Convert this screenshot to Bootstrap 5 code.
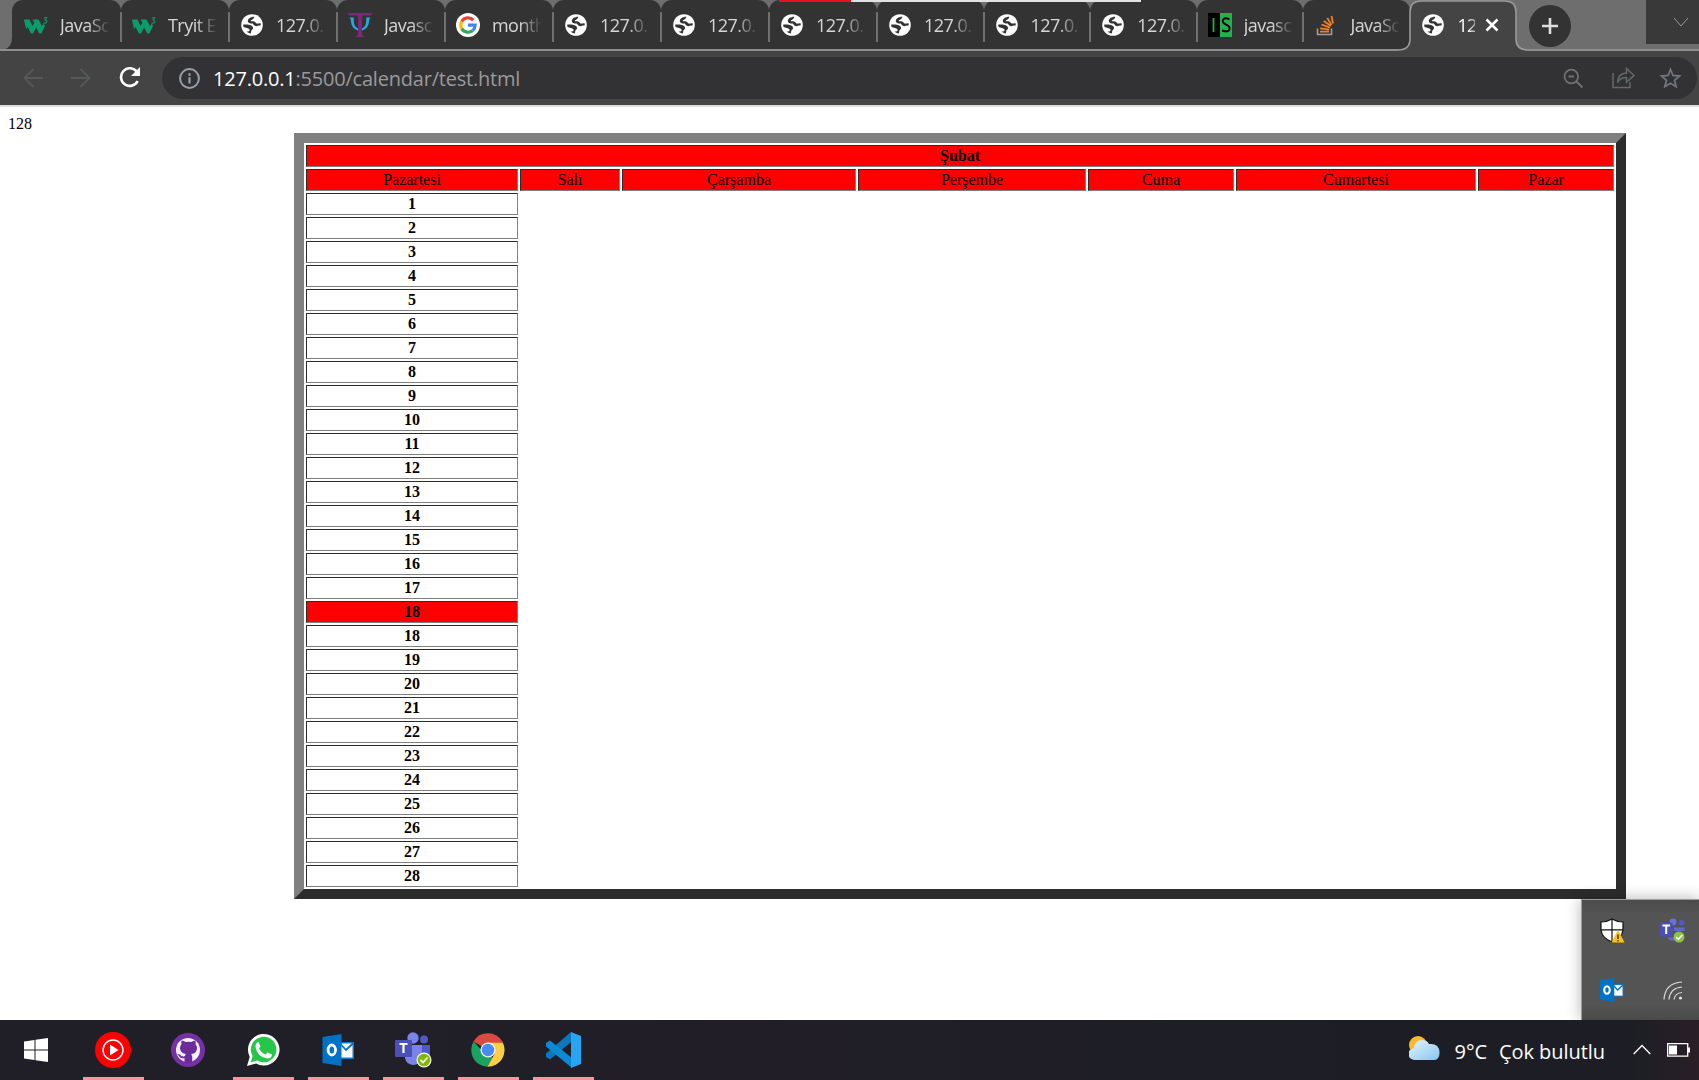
<!DOCTYPE html>
<html lang="tr">
<head>
<meta charset="utf-8">
<title>127.0.0.1:5500/calendar/test.html</title>
<link href="https://cdn.jsdelivr.net/npm/bootstrap@5.3.0/dist/css/bootstrap.min.css" rel="stylesheet">
<style>
body{width:1699px;height:1080px;overflow:hidden;background:#fff;color:#000;font-family:"Open Sans","Noto Sans",sans-serif}
svg{display:block;flex:none}
.strip{height:51px;background:#6e6e6e;padding-left:12px}
.strip-line{left:0;top:0}
.tab{width:108px;height:49px;background:#333;border-radius:11px 11px 0 0;padding-left:11px;color:#d6d6d6;font-size:18px;position:relative}
.tab::after{content:"";position:absolute;right:-1px;top:12px;width:2px;height:30px;background:#707070;z-index:1}
.tab:first-child{width:109px;padding-left:12px}
.tab.slim{width:106.6px}
.tab.last-off{width:107px}
.tab.last-off::after,.tab.on::after{display:none}
.tab.on{width:106px;background:none;color:#fff;padding-left:11px}
.fav{width:24px;height:24px;margin-right:12px}
.tab-text{width:50px;overflow:hidden;white-space:nowrap;letter-spacing:-.55px;line-height:26px;-webkit-mask-image:linear-gradient(90deg,#000 55%,transparent);mask-image:linear-gradient(90deg,#000 55%,transparent)}
.tab.on .tab-text{width:18px;margin-right:10px;-webkit-mask-image:linear-gradient(90deg,#000 60%,rgba(0,0,0,.5));mask-image:linear-gradient(90deg,#000 60%,rgba(0,0,0,.5))}
.plus{width:42px;height:42px;background:#333;margin:5px 0 0 13px}
.caption-box{width:53px;height:44px;background:#393939}
.topbar{left:779px;top:0;width:362px;height:2px;background:#e3e3e3;z-index:3}
.topbar div{width:72px;height:2px;background:#e81123}
.tools{height:56px;background:#444;border-bottom:2px solid #dcdcdc;padding:0 2px 0 23px}
.fwd-icon{margin-left:28px}
.reload-icon{margin:0 21px 0 28px}
.omni{height:42px;border-radius:21px;background:#323234;padding:0 15px 0 17px;color:#9a9a9a}
.url{font-size:20px;letter-spacing:-.21px;line-height:28px;margin-left:13px;padding-top:1px;white-space:nowrap}
.url b{font-weight:400;color:#fff}
.content{height:913px;padding:8px 0 0 8px;font:16px/18px "Liberation Serif",serif}
.cal{width:1332px;margin-left:286px;border:10px solid;border-color:#808080 #2c2c2c #2c2c2c #808080;border-collapse:separate;border-spacing:2px;table-layout:fixed;text-align:center}
.cal td,.cal th{height:22px;padding:1px;line-height:18px;border:1px solid;border-color:#2c2c2c #808080 #808080 #2c2c2c;text-align:center}
.cal .hot{background:red}
.tray{right:0;top:899px;width:118px;height:121px;background:linear-gradient(#4b4b4b,#545454 14px,#545454 105px,#4a4a4a);border:1px solid #9c9c9c;border-width:1px 0 0 1px;box-shadow:0 0 14px rgba(0,0,0,.3)}
.tray .row-a{height:60px;padding-left:18px;gap:35px}
.taskbar{height:60px;background:linear-gradient(90deg,#201f27,#211e27 45%,#1d1e25 80%,#1d1e25 96%,#2a1e27);position:relative;z-index:2;color:#fff}
.app{width:61px;height:60px;margin-right:14px;border-bottom:3px solid transparent;padding:3px 1px 0 0}
.app.run{border-color:#ff949e}
.app.start{margin-left:6px;margin-right:16px;padding-right:2px}
.weather{font-size:20px;white-space:nowrap;letter-spacing:-.05px;margin-right:16px}
.sky-icon{margin:-8px 15px 0 0}
.chev-icon{margin:-5px 0 0 26px}
.batt-icon{margin:-5px -7px 0 16px}
</style>
<script src="https://cdn.jsdelivr.net/npm/bootstrap@5.3.0/dist/js/bootstrap.bundle.min.js"></script>
</head>
<body>
<svg width="0" height="0" class="position-absolute">
<defs>
<symbol id="w3" viewBox="0 0 24 24"><path d="M0 6.500H5.500L8.500 13 10.300 10 8.700 6.500H14.500L18 13 19.800 10.500 21 13 17.300 20.500H15.300L12.200 14.500 9 20.500H7L3.500 14 2 16z" fill="#0a9c6b"/><path d="M19.800 4.700h2.900l-1.600 2.300q2 .3 1.800 1.800-.5 1.800-3.300 1.200" fill="none" stroke="#0a9c6b" stroke-width="1.100"/></symbol>
<symbol id="globe" viewBox="0 0 24 24"><circle cx="12" cy="12" r="10.800" fill="#fff"/><path d="M14 3.700C10.500 3.800 7.700 5.800 7.800 8c.1 1.800 1.800 2.600 5 2.600.8 1.700 2.200 2.600 3.700 2.600 1 0 2.200-.8 4-.6.3-.8.3-1.300.1-2.400-1.600-.2-2.400.4-3.800.2-1-.2-1.200-1.700-2.800-2-1.400-.2-3 .2-3.200-.5-.2-1 3.200-1.500 3.500-4.200z" fill="#333"/><path d="M3.200 11.500c2.500-.3 8.300-.2 9.500 2.200.7 1.400.3 2.700-1.200 3.500-.4.900-.2 2.200-.8 3.400-1.500-.2-3-.9-4.200-2 .8-.4 2.500.2 3-.8.4-1.200-.3-2-1.700-2.500C6 14.800 4.500 14.600 3.400 13.800z" fill="#333"/></symbol>
<symbol id="psi" viewBox="0 0 24 24"><path d="M1.500 4.500h4.300q-.8 9 4.200 11h4q5-2 4.200-11h4.300l-1.200 1.800q-.5 10-7.300 11.200h-4Q3.200 16.300 2.700 6.300z" fill="#27a9e1"/><path d="M0 0h24l-1 2.500h-9V22l3 2H7l3-2V2.500H1z" fill="#82257d"/></symbol>
<symbol id="goog" viewBox="0 0 24 24"><circle cx="12" cy="12" r="12" fill="#fff"/><g fill="none" stroke-width="3.200"><path d="M17.300 7.200A7.200 7.200 0 0 0 5.700 8.500" stroke="#ea4335"/><path d="M5.700 8.500a7.200 7.200 0 0 0 0 7" stroke="#fbbc05"/><path d="M5.700 15.500a7.200 7.200 0 0 0 11 2" stroke="#34a853"/><path d="M16.700 17.500q2.300-2 2.400-5.300H12" stroke="#4285f4"/></g></symbol>
<symbol id="is" viewBox="0 0 24 24"><path d="M0 0h12v24H0z"/><path d="M12 0h12v24H12z" fill="#24b14c"/><path d="M5.500 5v14" stroke="#24b14c" stroke-width="1.800"/><path d="M21.500 6.300q-6.500-2.500-6.800 1.700 0 2.200 3.400 3.600t3.600 3.700q-.5 4.700-7.700 2.200" fill="none" stroke="#000" stroke-width="2"/></symbol>
<symbol id="so" viewBox="0 0 24 24"><path d="M3.500 15.500V21.500h14v-6" fill="none" stroke="#9d9da8" stroke-width="1.600"/><path d="M6 18.700h9M6.200 15.300l9 1.300M7.500 11.500l8.300 3.200M9.800 8l7 5M13.300 5l4.200 7M17.500 3l1.500 7.500" stroke="#f48024" stroke-width="1.800"/></symbol>
<symbol id="outlook" viewBox="0 0 32 32"><path d="M17 8h14.500v17H17z" fill="#0b79cf"/><path d="M18.500 9.500H30V23.500H18.500z" fill="#fff"/><path d="M18 10l5.500 6 7.500-7" fill="none" stroke="#0072c6" stroke-width="1.800"/><path d="M0 3L19 0v32L0 29z" fill="#0072c6"/><ellipse cx="9.300" cy="16" rx="3.700" ry="5" fill="none" stroke="#fff" stroke-width="2.800"/></symbol>
<symbol id="teams" viewBox="0 0 38 36"><circle cx="19" cy="6" r="5.700" fill="#7b83eb"/><circle cx="30" cy="7.500" r="4" fill="#5059c9"/><path d="M25 13h11v9a7 7 0 0 1-11 6z" fill="#5059c9"/><path d="M11 13h17v13q-2 7-9 7-7-1-8-7z" fill="#7b83eb"/><path d="M2 8h15q1 0 1 1v15q0 1-1 1H2q-1 0-1-1V9q0-1 1-1z" fill="#4a50b5"/><path d="M5.500 12h8M9.500 12v9" stroke="#fff" stroke-width="2.200"/><circle cx="30" cy="28" r="7.500" fill="#fff"/><circle cx="30" cy="28" r="6.300" fill="#7fba00"/><path d="M26.500 28l2.500 2.500 4.500-5" fill="none" stroke="#fff" stroke-width="1.800"/></symbol>
<symbol id="teams-small" viewBox="0 0 25 25"><circle cx="13" cy="4" r="3.400" fill="#6a73d8"/><circle cx="21.500" cy="4.800" r="2.800" fill="#5059c9"/><path d="M14 9.500h10.500V13H14zM7.500 19.500h7v3.300q-5 .5-7-3.300z" fill="#6068cf"/><path d="M1 4.500h11.500v14H0V5.500z" fill="#4a50b5"/><path d="M2.500 7.500h7.500M6.200 7.500v8.500" stroke="#fff" stroke-width="2"/><circle cx="19" cy="19" r="5.500" fill="#8bc34a"/><path d="M16 19l2.300 2.200 4-4.200" fill="none" stroke="#fff" stroke-width="1.500"/></symbol>
</defs>
</svg>

<header class="strip d-flex position-relative">
  <div class="topbar position-absolute"><div></div></div>
  <div id="tabs" class="d-flex position-relative"></div>
  <svg class="strip-line position-absolute" width="1699" height="51" viewBox="0 0 1699 51" fill="none"><path d="M5 49q7-2 7-12v12z" fill="#333"/><path d="M1398 50Q1410 50 1410 39V12Q1410 1 1421 1H1505Q1516 1 1516 12V39Q1516 50 1528 50V51H1398z" fill="#444"/><path d="M0 50H1398Q1410 50 1410 39V12Q1410 1 1421 1H1505Q1516 1 1516 12V39Q1516 50 1528 50H1699" stroke="#999" stroke-width="1.600"/></svg>
  <div class="tab on d-flex align-items-center"><svg class="fav"><use href="#globe"/></svg><div class="tab-text">12</div><svg width="14" height="14" viewBox="0 0 14 14"><path d="M1.500 1.500l11 11M12.500 1.500l-11 11" stroke="#fff" stroke-width="2.500"/></svg></div>
  <div class="plus rounded-circle d-flex align-items-center justify-content-center"><svg width="20" height="20"><path d="M10 2v16M2 10h16" stroke="#ddd" stroke-width="2.600"/></svg></div>
  <div class="caption-box ms-auto d-flex align-items-center justify-content-center"><svg class="ms-3" width="18" height="12"><path d="M2 2l7 8 7-8" fill="none" stroke="#999"/></svg></div>
</header>

<nav class="tools d-flex align-items-center">
  <svg width="20" height="20" viewBox="0 0 20 20" fill="none" stroke="#56585a" stroke-width="1.800"><path d="M20 10H2M10.500 1L1.500 10l9 9"/></svg>
  <svg class="fwd-icon" width="20" height="20" viewBox="0 0 20 20" fill="none" stroke="#56585a" stroke-width="1.800"><path d="M0 10h18M9.500 1l9 9-9 9"/></svg>
  <svg class="reload-icon" width="22" height="22" viewBox="0 0 22 22"><path d="M18 5A8.800 8.800 0 1 0 18.700 14" fill="none" stroke="#fff" stroke-width="2.600"/><path d="M21 0v9h-9z" fill="#fff"/></svg>
  <div class="omni flex-grow-1 d-flex align-items-center">
    <svg width="21" height="21" viewBox="0 0 21 21"><circle cx="10.500" cy="10.500" r="9.400" fill="none" stroke="#9aa0a6" stroke-width="2"/><path d="M10.500 9.200v6.300M10.500 5.200v2.500" stroke="#9aa0a6" stroke-width="2.200"/></svg>
    <div class="url"><b>127.0.0.1</b>:5500/calendar/test.html</div>
    <svg class="ms-auto" width="21" height="21" viewBox="0 0 21 21" fill="none" stroke="#6f7173" stroke-width="1.800"><circle cx="8.300" cy="8.500" r="6.800"/><path d="M5.500 8.500h5.500M13 13l6.500 6.500"/></svg>
    <svg class="fwd-icon me-4" width="23" height="22" viewBox="0 0 23 22" fill="none" stroke="#66686a" stroke-width="1.500"><path d="M1 6v14.500h17V15"/><path d="M5.500 15.500Q6 6.500 14.500 6V1.500L22 8.500l-7.500 6.500v-4.500Q8.500 10.500 5.500 15.500z"/></svg>
    <svg width="23" height="22" viewBox="0 0 23 22"><path d="M11.500 2.500l2.500 6 6.500.5-5 4.300 1.600 6.400-5.600-3.400-5.600 3.400 1.600-6.400-5-4.300 6.500-.5z" fill="none" stroke="#737578" stroke-width="1.800"/></svg>
  </div>
</nav>

<main class="content">
  <div>128</div>
  <table class="cal">
    <colgroup><col style="width:212px"><col style="width:100px"><col style="width:234px"><col style="width:228px"><col style="width:146px"><col style="width:240px"><col style="width:136px"></colgroup>
    <tbody id="days">
      <tr><th class="hot" colspan="7">Şubat</th></tr>
      <tr><td class="hot">Pazartesi</td><td class="hot">Salı</td><td class="hot">Çarşamba</td><td class="hot">Perşembe</td><td class="hot">Cuma</td><td class="hot">Cumartesi</td><td class="hot">Pazar</td></tr>
    </tbody>
  </table>
</main>

<aside class="tray position-absolute">
  <div class="row-a d-flex align-items-center">
    <svg width="25" height="25" viewBox="0 0 25 25"><path d="M12 1q5 3 11 3v8q-1 8-11 12Q2 20 1 12V4q6 0 11-3z" fill="#fff" stroke="#111" stroke-width="1.200"/><path d="M12 1v23M1 11.800h22" stroke="#111" stroke-width="1.200"/><path d="M18 12l6.500 12.500h-13z" fill="#ffc20e"/><path d="M18 16.500v4.500M18 22v1.500" stroke="#111" stroke-width="1.200"/></svg>
    <svg width="25" height="25"><use href="#teams-small"/></svg>
  </div>
  <div class="row-a d-flex align-items-center">
    <svg width="24" height="24"><use href="#outlook"/></svg>
    <svg class="ms-1" width="20" height="20" viewBox="0 0 20 20" fill="none" stroke="#ddd" stroke-width="1.200"><path d="M1 19.500Q2 3 19 2M6 19.500Q7 8 19 7M11 19.500Q12 13 19 12.500"/><circle cx="17.500" cy="18" r="1" fill="#fff"/></svg>
  </div>
</aside>

<footer class="taskbar d-flex">
  <div class="app start d-flex align-items-center justify-content-center"><svg width="24" height="24" viewBox="0 0 24 24" fill="#fff"><path d="M0 3.400L10.500 2v9.500H0zM11.500 1.700L24 0v11.500H11.500zM0 12.500h10.500V22L0 20.600zM11.500 12.500H24V24l-12.500-1.700z"/></svg></div>
  <div class="app run d-flex align-items-center justify-content-center"><svg width="36" height="36"><circle cx="18" cy="18" r="18" fill="red"/><circle cx="18" cy="18" r="10" fill="none" stroke="#fff" stroke-width="1.500"/><path d="M15 12.500l8.500 5.500-8.500 5.500z" fill="#fff"/></svg></div>
  <div class="app d-flex align-items-center justify-content-center"><svg width="34" height="34" viewBox="0 0 34 34"><circle cx="17" cy="17" r="17" fill="#7531a3"/><circle cx="17" cy="17" r="12" fill="#f5f0fa"/><path d="M13.500 30v-5q-4 1-5.500-2l-2-2 3 .5q2 3 4.800 1.500l1-2Q9 20 9 15q0-2.200 1.500-4-.7-2 .2-3.500 2 0 4 1.500 3-.6 5.600 0 2-1.500 4-1.500.8 2 .2 3.500Q26 13 26 15q0 5.500-5.800 6l1 2.500V30z" fill="#6a2c9a"/></svg></div>
  <div class="app run d-flex align-items-center justify-content-center"><svg width="34" height="34" viewBox="0 0 34 34"><path d="M1 33l2.700-9A15.800 15.800 0 1 1 10 30.500z" fill="#fff"/><path d="M4.800 29.200L6.600 23A12.800 12.800 0 1 1 11.200 27.600z" fill="#25c64a"/><path d="M12.500 9l2 4.500-1.500 2q2.500 4.500 6.500 6l2-2.300 4.500 2.300q0 4-5 4Q11 23.500 9.500 14q0-4.500 3-5z" fill="#fff"/></svg></div>
  <div class="app run d-flex align-items-center justify-content-center"><svg width="33" height="32"><use href="#outlook"/></svg></div>
  <div class="app run d-flex align-items-center justify-content-center"><svg width="38" height="36"><use href="#teams"/></svg></div>
  <div class="app run d-flex align-items-center justify-content-center"><svg width="34" height="34" viewBox="0 0 34 34"><path d="M17 17L2.500 8.500A16.700 16.700 0 0 1 31.500 8.700z" fill="#db4a3e"/><path d="M17 17H10.500L2.500 8.500A16.800 16.800 0 0 0 16.500 33.800l5-8.500z" fill="#1aa260"/><path d="M17 9.500h14.800A16.800 16.800 0 0 1 16.500 33.800L23.500 21z" fill="#ffce44"/><path d="M17 9.500h14.800l-.5-1.500H17z" fill="#db4a3e"/><circle cx="17" cy="17" r="7.600" fill="#f3f3f3"/><circle cx="17" cy="17" r="6.200" fill="#4a8af4"/></svg></div>
  <div class="app run d-flex align-items-center justify-content-center"><svg width="36" height="36" viewBox="0 0 36 36"><path d="M26 0v10L5 27.500 1 25v-3.500z" fill="#0a78be"/><path d="M1 11l4-2.500L27 26v10L1 14.500z" fill="#0b8ad4"/><path d="M26 0l10 4v28l-10 4z" fill="#27a5f2"/></svg></div>
  <div class="weather ms-auto d-flex align-items-center pt-1">
    <svg class="sky-icon" width="31" height="25" viewBox="0 0 31 25"><defs><linearGradient id="cl" x2="1" y2="1"><stop stop-color="#e5f5fd"/><stop offset="1" stop-color="#86c4ee"/></linearGradient></defs><circle cx="9" cy="9" r="9" fill="#fdb92e"/><path d="M6 24a6 6 0 0 1-1-12q1-8 8-8 5 0 7 4 10-1 10.500 8T23 24z" fill="url(#cl)"/></svg>
    <span class="me-2 pe-1">9°C</span><span class="pe-1">Çok bulutlu</span>
    <svg class="chev-icon ms-4" width="18" height="11"><path d="M.7 10L9 1.500 17.300 10" fill="none" stroke="#fff" stroke-width="1.300"/></svg>
    <svg class="batt-icon" width="23" height="14"><path d="M.7.700h20v12.500H.7z" fill="none" stroke="#fff" stroke-width="1.300"/><path d="M2 2.500h8v9H2zM21 4.500h2v5h-2z" fill="#fff"/></svg>
  </div>
</footer>

<script>
const tabs=[["w3","JavaSc"],["w3","Tryit E"],["globe","127.0."],["psi","Javasc"],["goog","month"],["globe","127.0."],["globe","127.0."],["globe","127.0."],["globe","127.0."],["globe","127.0."],["globe","127.0."],["is","javasc"],["so","JavaSc"]];
document.getElementById("tabs").innerHTML=tabs.map(([icon,text],i)=>`<div class="tab d-flex align-items-center ${i>7?"slim":""} ${i==12?"last-off":""}"><svg class="fav"><use href="#${icon}"/></svg><div class="tab-text">${text}</div></div>`).join("");
const days=[];
for(let d=1;d<=28;d++){if(d==18)days.push(`<tr><th class="hot">18</th></tr>`);days.push(`<tr><th>${d}</th></tr>`);}
document.getElementById("days").insertAdjacentHTML("beforeend",days.join(""));
</script>
</body>
</html>
